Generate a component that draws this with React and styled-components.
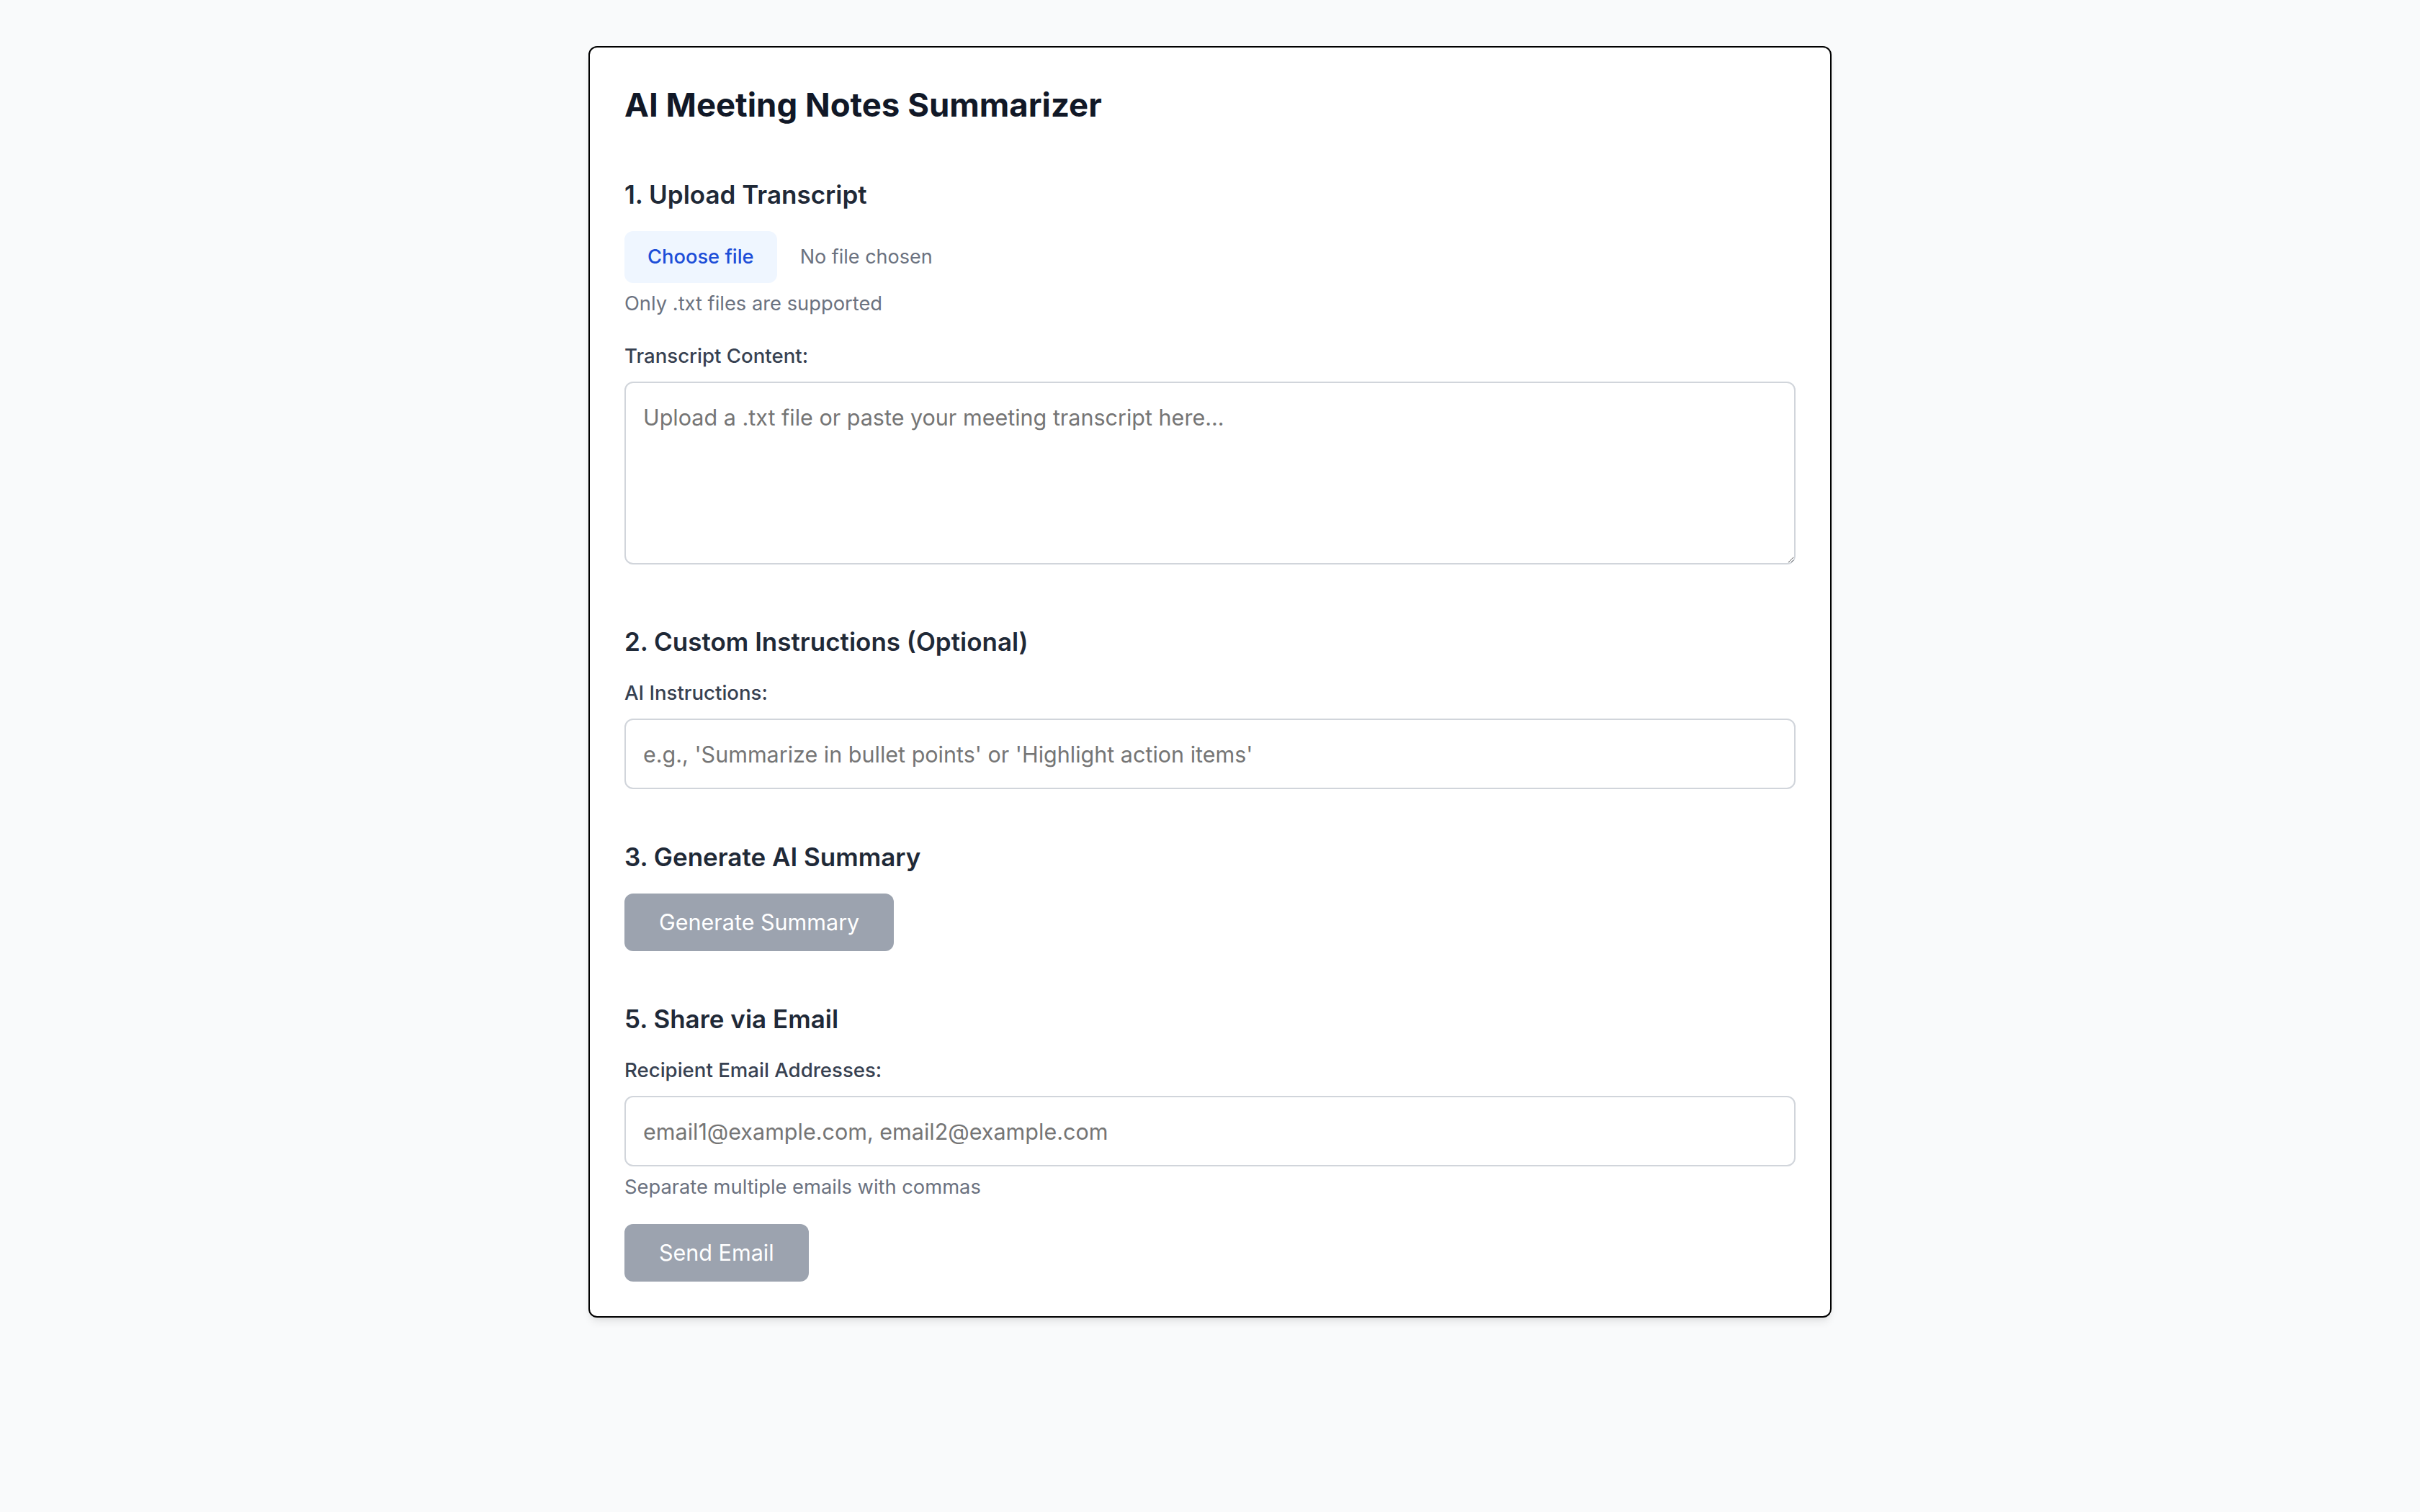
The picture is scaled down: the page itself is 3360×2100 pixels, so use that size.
import React, { useState } from 'react';
import styled, { createGlobalStyle } from 'styled-components';

const GlobalStyle = createGlobalStyle`
  * {
    box-sizing: border-box;
  }

  body {
    margin: 0;
    background: #f9fafb;
    font-family: Inter, "Noto Sans", sans-serif;
    color: #111827;
  }
`;

const Page = styled.div`
  min-height: 100vh;
  padding: 64px 0;
`;

const Card = styled.div`
  width: 1726px;
  margin: 0 auto;
  padding: 48px;
  background: #fff;
  border: 2px solid #000;
  border-radius: 12px;
  box-shadow: 0 8px 12px -2px rgba(0, 0, 0, 0.08), 0 4px 8px -4px rgba(0, 0, 0, 0.08);
  display: flex;
  flex-direction: column;
`;

const Title = styled.h1`
  margin: 0 0 68px;
  font-size: 45.5px;
  line-height: 64px;
  font-weight: 700;
  color: #111827;
`;

const Section = styled.section`
  display: flex;
  flex-direction: column;
  align-items: flex-start;
  margin-bottom: ${(p) => (p.$loose ? '83px' : '70px')};

  &:last-child {
    margin-bottom: 0;
  }
`;

const SectionTitle = styled.h2`
  margin: 0 0 27px;
  font-size: 35px;
  line-height: 48px;
  font-weight: 600;
  color: #1f2937;
`;

const Label = styled.label`
  display: block;
  margin: ${(p) => (p.$spaced ? '32px 0 16px' : '0 0 16px')};
  font-size: 27.6px;
  line-height: 40px;
  font-weight: 500;
  color: #374151;
`;

const Hint = styled.p`
  margin: 9px 0 0;
  font-size: 27.3px;
  line-height: 40px;
  color: #6b7280;
`;

const FileRow = styled.label`
  display: flex;
  align-items: center;
  cursor: pointer;

  input {
    display: none;
  }
`;

const FileButton = styled.span`
  padding: 16px 32px;
  margin-right: 32px;
  font-size: 27.3px;
  line-height: 40px;
  font-weight: 500;
  color: #1d4ed8;
  background: #eff6ff;
  border-radius: 12px;
`;

const FileName = styled.span`
  font-size: 27px;
  line-height: 40px;
  color: #6b7280;
`;

const TextArea = styled.textarea`
  display: block;
  width: 100%;
  height: 254px;
  padding: 24px;
  font-family: inherit;
  font-size: 30.5px;
  line-height: 48px;
  color: #111827;
  border: 2px solid #d1d5db;
  border-radius: 12px;
  resize: vertical;
  outline: none;

  &::placeholder {
    color: #757575;
  }
`;

const TextInput = styled.input`
  display: block;
  width: 100%;
  height: 98px;
  padding: 0 24px;
  font-family: inherit;
  font-size: 30.5px;
  color: #111827;
  border: 2px solid #d1d5db;
  border-radius: 12px;
  outline: none;

  &::placeholder {
    color: #757575;
  }
`;

const ActionButton = styled.button`
  margin-top: ${(p) => (p.$spaced ? '31px' : '0')};
  padding: 16px 48px;
  font-family: inherit;
  font-size: 30.5px;
  line-height: 48px;
  color: #fff;
  background: #2563eb;
  border: none;
  border-radius: 12px;
  cursor: pointer;

  &:disabled {
    background: #9ca3af;
    cursor: not-allowed;
  }
`;

const App = () => {
  const [fileName, setFileName] = useState('');
  const [transcript, setTranscript] = useState('');
  const [instructions, setInstructions] = useState('');
  const [emails, setEmails] = useState('');

  const onFile = (e) => {
    const file = e.target.files && e.target.files[0];
    if (!file) return;
    setFileName(file.name);
    file.text().then(setTranscript);
  };

  return (
    <Page>
      <GlobalStyle />
      <Card>
        <Title>AI Meeting Notes Summarizer</Title>

        <Section $loose>
          <SectionTitle>1. Upload Transcript</SectionTitle>
          <FileRow>
            <input type="file" accept=".txt" onChange={onFile} />
            <FileButton>Choose file</FileButton>
            <FileName>{fileName || 'No file chosen'}</FileName>
          </FileRow>
          <Hint>Only .txt files are supported</Hint>
          <Label $spaced htmlFor="transcript">Transcript Content:</Label>
          <TextArea
            id="transcript"
            value={transcript}
            onChange={(e) => setTranscript(e.target.value)}
            placeholder="Upload a .txt file or paste your meeting transcript here..."
          />
        </Section>

        <Section>
          <SectionTitle>2. Custom Instructions (Optional)</SectionTitle>
          <Label htmlFor="instructions">AI Instructions:</Label>
          <TextInput
            id="instructions"
            value={instructions}
            onChange={(e) => setInstructions(e.target.value)}
            placeholder="e.g., 'Summarize in bullet points' or 'Highlight action items'"
          />
        </Section>

        <Section>
          <SectionTitle>3. Generate AI Summary</SectionTitle>
          <ActionButton disabled={!transcript.trim()}>Generate Summary</ActionButton>
        </Section>

        <Section>
          <SectionTitle>5. Share via Email</SectionTitle>
          <Label htmlFor="emails">Recipient Email Addresses:</Label>
          <TextInput
            id="emails"
            value={emails}
            onChange={(e) => setEmails(e.target.value)}
            placeholder="email1@example.com, email2@example.com"
          />
          <Hint>Separate multiple emails with commas</Hint>
          <ActionButton $spaced disabled>Send Email</ActionButton>
        </Section>
      </Card>
    </Page>
  );
};

export default App;
